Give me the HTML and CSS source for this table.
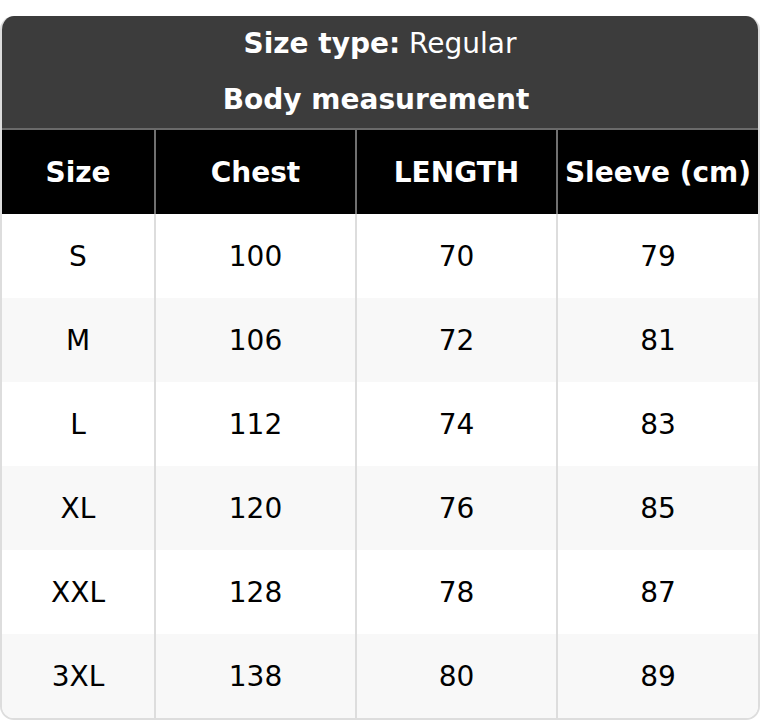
FILE: index.html
```html
<!DOCTYPE html>
<html>
<head>
<meta charset="utf-8">
<link rel="stylesheet" href="styles.css">
</head>
<body>
<div class="chart">
  <div class="title">
    <div class="line"><b>Size type:</b> Regular</div>
    <div class="line shift"><b>Body measurement</b></div>
  </div>
  <table class="grid">
    <colgroup>
      <col class="c1"><col class="c2"><col class="c3"><col class="c4">
    </colgroup>
    <thead>
      <tr><th>Size</th><th>Chest</th><th>LENGTH</th><th>Sleeve (cm)</th></tr>
    </thead>
    <tbody>
      <tr><td>S</td><td>100</td><td>70</td><td>79</td></tr>
      <tr><td>M</td><td>106</td><td>72</td><td>81</td></tr>
      <tr><td>L</td><td>112</td><td>74</td><td>83</td></tr>
      <tr><td>XL</td><td>120</td><td>76</td><td>85</td></tr>
      <tr><td>XXL</td><td>128</td><td>78</td><td>87</td></tr>
      <tr><td>3XL</td><td>138</td><td>80</td><td>89</td></tr>
    </tbody>
  </table>
</div>
</body>
</html>
```

FILE: styles.css
```css
html, body {
  margin: 0;
  padding: 0;
  background: #ffffff;
}
body {
  padding-top: 16px;
  font-family: "DejaVu Sans", "Liberation Sans", sans-serif;
  font-size: 28px;
  color: #000;
}
.chart {
  width: 760px;
  box-sizing: border-box;
  border: 2px solid #dddddd;
  border-top: none;
  border-radius: 14px;
  overflow: hidden;
}
.title {
  background: #3c3c3c;
  color: #ffffff;
  text-align: center;
  border-bottom: 2px solid #6a6a6a;
}
.line {
  height: 56px;
  line-height: 56px;
}
.shift { padding-right: 8px; }
.line b { font-weight: bold; }
.grid {
  width: 100%;
  border-collapse: collapse;
  table-layout: fixed;
}
.c1 { width: 153px; }
.c2 { width: 201px; }
.c3 { width: 201px; }
.c4 { width: 201px; }
th {
  background: #000;
  color: #fff;
  font-weight: bold;
  height: 84px;
  padding: 0;
  border-left: 2px solid #707070;
  white-space: nowrap;
}
td {
  height: 84px;
  padding: 0;
  text-align: center;
  border-left: 2px solid #dddddd;
}
th:first-child, td:first-child { border-left: none; }
tbody tr:nth-child(even) td { background: #f8f8f8; }
```
